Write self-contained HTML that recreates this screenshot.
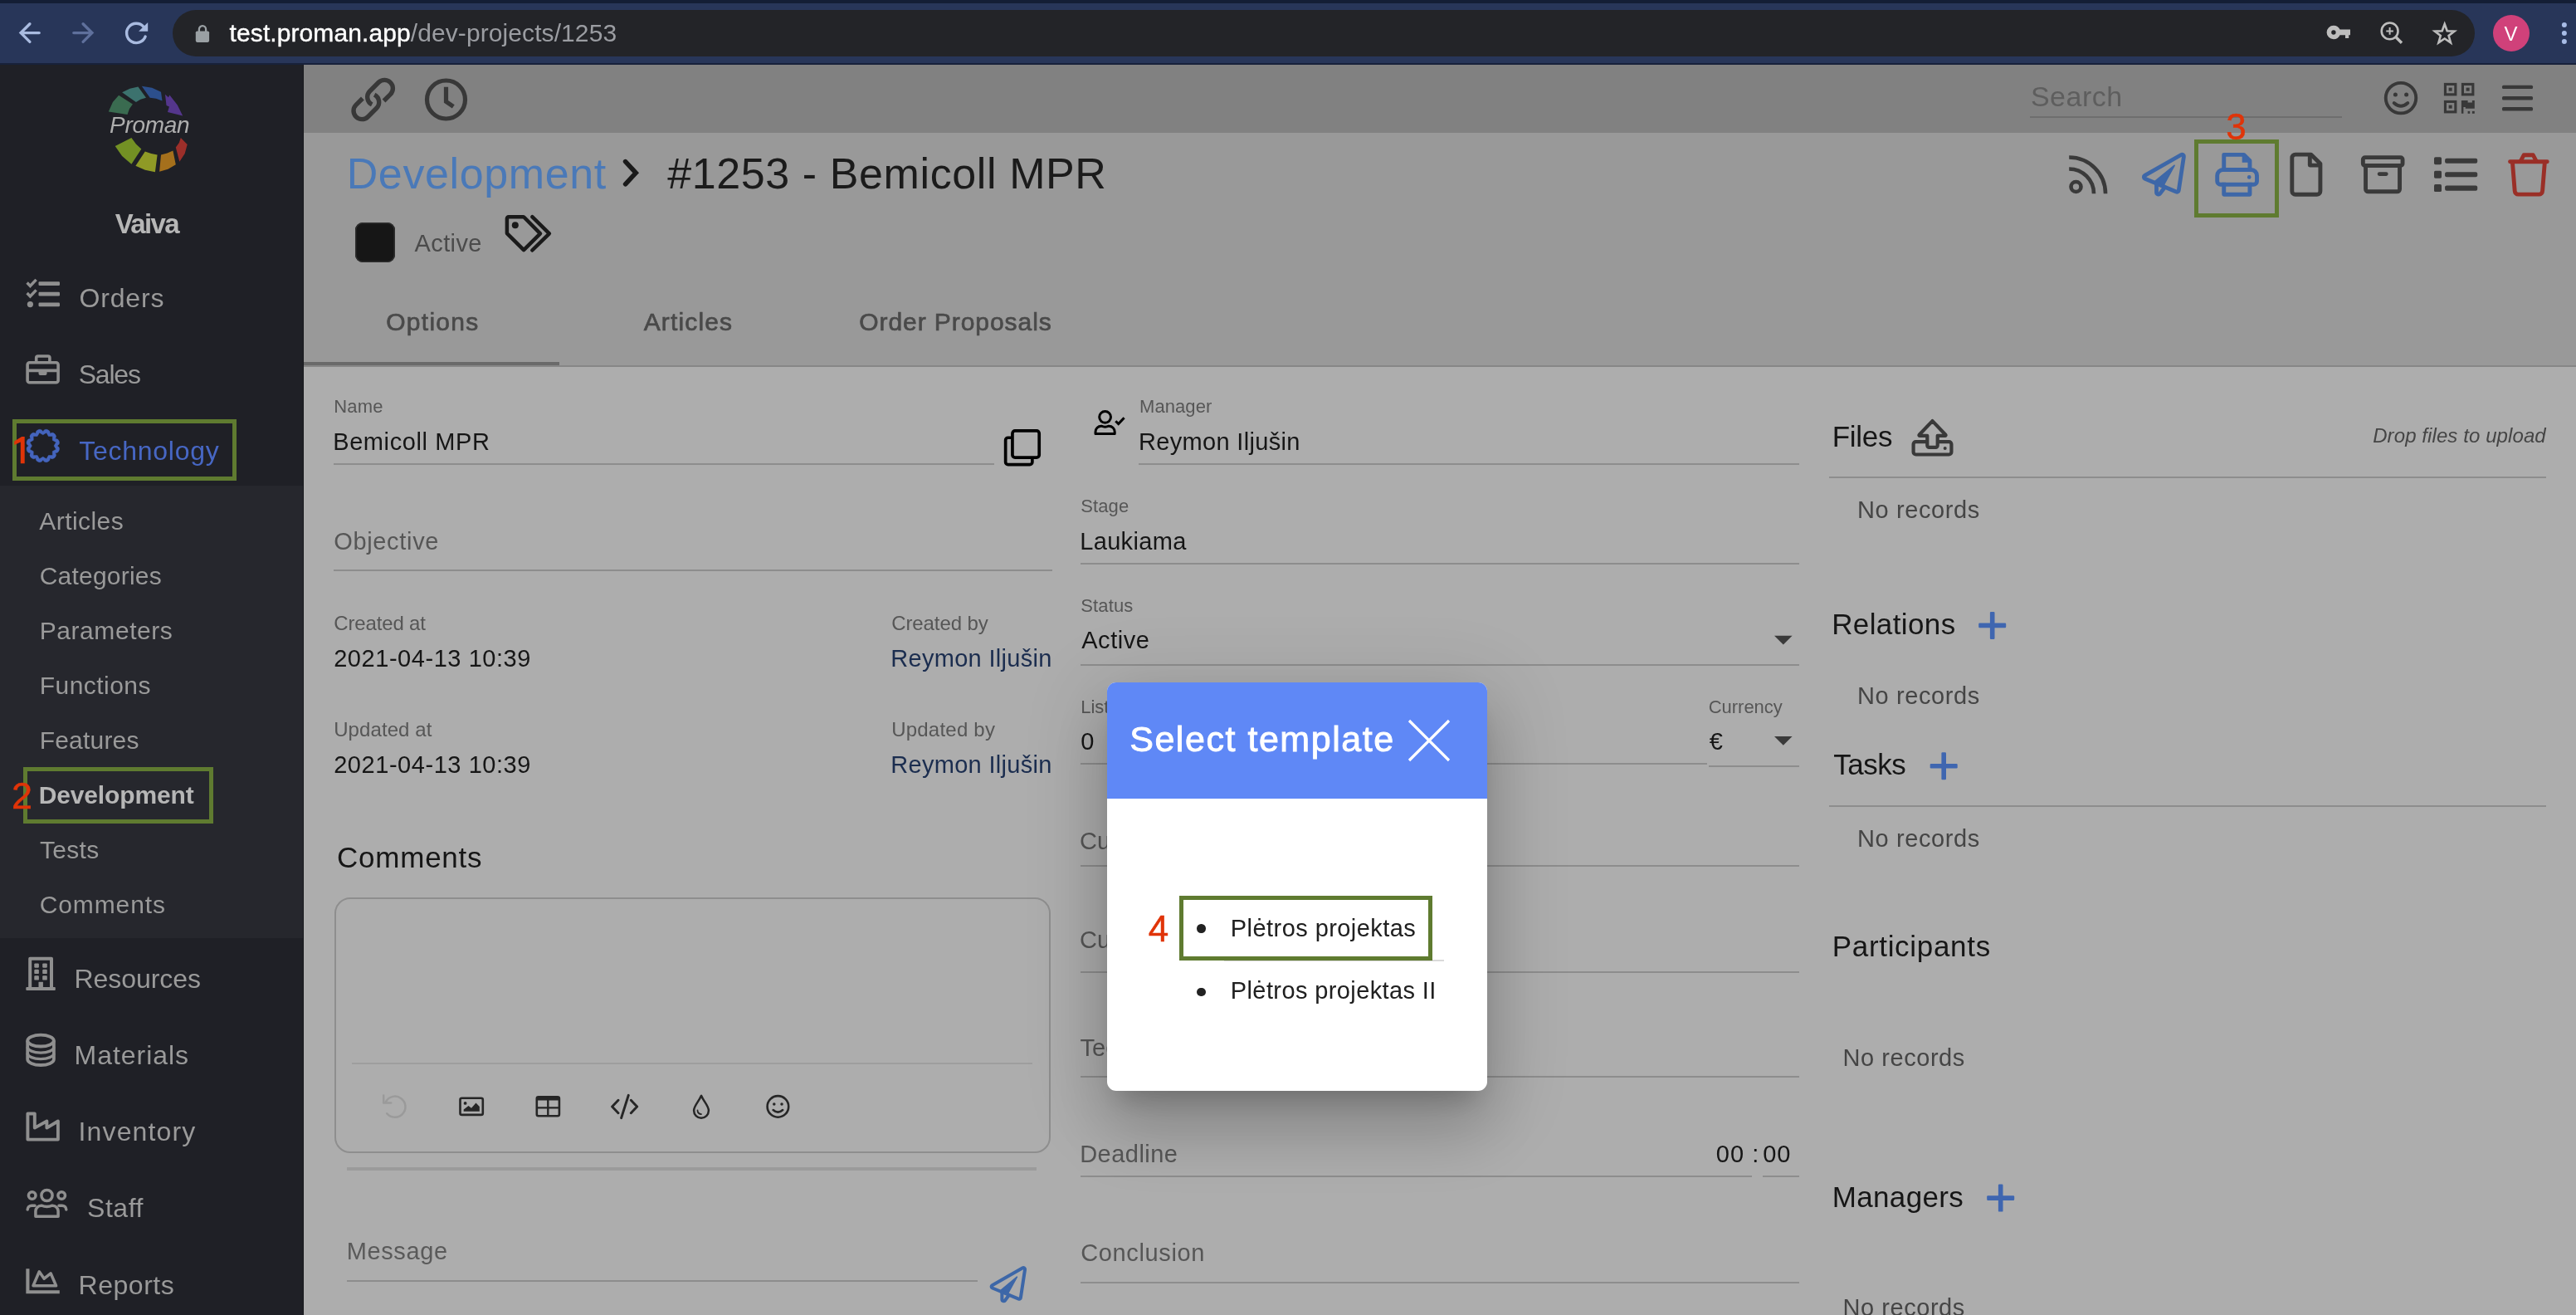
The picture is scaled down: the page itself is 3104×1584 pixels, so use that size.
<!DOCTYPE html><html><head><meta charset="utf-8"><title>Proman</title><style>
html,body{margin:0;padding:0;}
body{width:3104px;height:1584px;position:relative;overflow:hidden;background:#adadad;font-family:"Liberation Sans", sans-serif;}
#page div,#page span.t,#modal div,#modal span.t{position:absolute;}
.t{white-space:nowrap;line-height:1;}
#page,#page2{will-change:transform;}
svg.ov{position:absolute;left:0;top:0;}
#modal{position:absolute;left:1334px;top:822px;width:457.5px;height:491.5px;background:#fff;border-radius:11px;
box-shadow:0 22px 30px -14px rgba(0,0,0,.2),0 48px 76px 6px rgba(0,0,0,.14),0 18px 92px 16px rgba(0,0,0,.12);}
#mhead{left:0;top:0;width:457.5px;height:140px;background:#5f88f6;border-radius:11px 11px 0 0;}
</style></head><body>
<div id="page">
<div style="left:0px;top:0px;width:3104px;height:78px;background:#283659;"></div>
<div style="left:0px;top:0px;width:3104px;height:3.5px;background:#141e35;"></div>
<div style="left:0px;top:76.3px;width:3104px;height:1.7px;background:#18213a;"></div>
<div style="left:208px;top:12px;width:2774px;height:55.6px;background:#232428;border-radius:28px;"></div>
<div style="left:0px;top:78px;width:366px;height:1506px;background:#1f2026;"></div>
<div style="left:0px;top:585px;width:366px;height:544.5px;background:#26272d;"></div>
<div style="left:366px;top:78px;width:2738px;height:82px;background:#818181;"></div>
<div style="left:366px;top:160px;width:2738px;height:282px;background:#999999;"></div>
<div style="left:366px;top:442px;width:2738px;height:1142px;background:#adadad;"></div>
<div style="left:366px;top:440px;width:2738px;height:2.1px;background:#868686;"></div>
<div style="left:366px;top:435.6px;width:308px;height:4.6px;background:#6a6a6a;"></div>
<div style="left:364.5px;top:78px;width:1.5px;height:1506px;background:#17181c;"></div>
<div style="left:3004px;top:18px;width:44px;height:44px;background:#d0417a;border-radius:50%;"></div>
<div style="left:427.6px;top:267.6px;width:48.4px;height:48px;background:#161616;border-radius:9px;box-shadow:inset 0 0 0 1.5px #2e2e2e;"></div>
<div style="left:403px;top:1080.6px;width:862.5px;height:308.6px;border:2px solid #8e8e8e;border-radius:19px;box-sizing:border-box;"></div>
<div style="left:423.5px;top:1280.0px;width:820.2px;height:1.5px;background:#9e9e9e;"></div>
<div style="left:417.7px;top:1406.1px;width:831.7px;height:4.2px;background:#9b9b9b;"></div>
<div style="left:2446px;top:140.2px;width:376px;height:1.6px;background:#6e6e6e;"></div>
<div style="left:402px;top:558.0px;width:795.8px;height:2px;background:#8d8d8d;"></div>
<div style="left:402px;top:685.7px;width:866px;height:2px;background:#8d8d8d;"></div>
<div style="left:417.7px;top:1541.6px;width:760.3px;height:2px;background:#8d8d8d;"></div>
<div style="left:1372px;top:558.0px;width:796px;height:2px;background:#8d8d8d;"></div>
<div style="left:1302px;top:678.0px;width:866px;height:2px;background:#8d8d8d;"></div>
<div style="left:1302px;top:799.7px;width:866px;height:2px;background:#8d8d8d;"></div>
<div style="left:1302px;top:919.4px;width:755px;height:2px;background:#8d8d8d;"></div>
<div style="left:2058.5px;top:921.5px;width:109.5px;height:2px;background:#8d8d8d;"></div>
<div style="left:1302px;top:1041.8px;width:866px;height:2px;background:#8d8d8d;"></div>
<div style="left:1302px;top:1169.5px;width:866px;height:2px;background:#8d8d8d;"></div>
<div style="left:1302px;top:1295.5px;width:866px;height:2px;background:#8d8d8d;"></div>
<div style="left:1302px;top:1416.4px;width:809.4px;height:2px;background:#8d8d8d;"></div>
<div style="left:2124px;top:1416.4px;width:44px;height:2px;background:#8d8d8d;"></div>
<div style="left:1302px;top:1543.6px;width:866px;height:2px;background:#8d8d8d;"></div>
<div style="left:2204px;top:574.4px;width:864px;height:2px;background:#8d8d8d;"></div>
<div style="left:2204px;top:969.6px;width:864px;height:2px;background:#8d8d8d;"></div>
<span id="t1" class="t" style="left:276.6px;top:25.2px;font-size:30px;color:#ffffff;-webkit-text-stroke:0.4px #ffffff;letter-spacing:0.09px;">test.proman.app<span style="color:#9b9da2;-webkit-text-stroke:0">/dev-projects/1253</span></span>
<span id="t2" class="t" style="left:3017.6px;top:28.9px;font-size:24px;color:#ffffff;">V</span>
<span id="t3" class="t" style="left:132.0px;top:137.0px;font-size:28px;color:#aeaeae;font-style:italic;letter-spacing:-0.29px;">Proman</span>
<span id="t4" class="t" style="left:138.7px;top:252.5px;font-size:33px;color:#b6b6b6;font-weight:700;letter-spacing:-1.62px;">Vaiva</span>
<span id="t5" class="t" style="left:95.4px;top:343.1px;font-size:32px;color:#9a9a9a;letter-spacing:0.88px;">Orders</span>
<span id="t6" class="t" style="left:94.7px;top:434.7px;font-size:32px;color:#9a9a9a;letter-spacing:-1.21px;">Sales</span>
<span id="t7" class="t" style="left:95.3px;top:526.7px;font-size:32px;color:#4767c4;letter-spacing:0.72px;">Technology</span>
<span id="t8" class="t" style="left:47.3px;top:613.0px;font-size:30px;color:#9a9a9a;letter-spacing:0.44px;">Articles</span>
<span id="t9" class="t" style="left:47.7px;top:678.9px;font-size:30px;color:#9a9a9a;letter-spacing:0.21px;">Categories</span>
<span id="t10" class="t" style="left:47.7px;top:744.9px;font-size:30px;color:#9a9a9a;letter-spacing:0.57px;">Parameters</span>
<span id="t11" class="t" style="left:47.7px;top:810.8px;font-size:30px;color:#9a9a9a;letter-spacing:0.47px;">Functions</span>
<span id="t12" class="t" style="left:47.7px;top:876.7px;font-size:30px;color:#9a9a9a;letter-spacing:0.20px;">Features</span>
<span id="t13" class="t" style="left:46.7px;top:943.2px;font-size:30px;color:#b6b6b6;font-weight:700;letter-spacing:-0.14px;">Development</span>
<span id="t14" class="t" style="left:47.9px;top:1009.0px;font-size:30px;color:#9a9a9a;letter-spacing:0.34px;">Tests</span>
<span id="t15" class="t" style="left:47.7px;top:1075.0px;font-size:30px;color:#9a9a9a;letter-spacing:0.90px;">Comments</span>
<span id="t16" class="t" style="left:89.6px;top:1163.3px;font-size:32px;color:#9a9a9a;letter-spacing:-0.08px;">Resources</span>
<span id="t17" class="t" style="left:89.6px;top:1254.9px;font-size:32px;color:#9a9a9a;letter-spacing:0.95px;">Materials</span>
<span id="t18" class="t" style="left:94.5px;top:1347.3px;font-size:32px;color:#9a9a9a;letter-spacing:1.15px;">Inventory</span>
<span id="t19" class="t" style="left:105.1px;top:1438.6px;font-size:32px;color:#9a9a9a;letter-spacing:0.51px;">Staff</span>
<span id="t20" class="t" style="left:94.5px;top:1532.4px;font-size:32px;color:#9a9a9a;letter-spacing:0.54px;">Reports</span>
<span id="t21" class="t" style="left:2446.9px;top:98.5px;font-size:34px;color:#5e5e5e;letter-spacing:0.52px;">Search</span>
<span id="t22" class="t" style="left:417.7px;top:183.0px;font-size:52px;color:#4a79b8;letter-spacing:0.62px;">Development</span>
<span id="t23" class="t" style="left:804.2px;top:183.0px;font-size:52px;color:#1b1b1b;letter-spacing:0.60px;">#1253 - Bemicoll MPR</span>
<span id="t24" class="t" style="left:499.6px;top:279.3px;font-size:29px;color:#4b4b4b;letter-spacing:0.37px;">Active</span>
<span id="t25" class="t" style="left:465.2px;top:372.6px;font-size:30px;color:#4a4a4a;-webkit-text-stroke:0.7px #4a4a4a;letter-spacing:1.28px;">Options</span>
<span id="t26" class="t" style="left:775.7px;top:372.6px;font-size:30px;color:#4a4a4a;-webkit-text-stroke:0.7px #4a4a4a;letter-spacing:1.14px;">Articles</span>
<span id="t27" class="t" style="left:1035.2px;top:372.6px;font-size:30px;color:#4a4a4a;-webkit-text-stroke:0.7px #4a4a4a;letter-spacing:0.94px;">Order Proposals</span>
<span id="t28" class="t" style="left:402.2px;top:478.9px;font-size:22px;color:#565656;letter-spacing:0.22px;">Name</span>
<span id="t29" class="t" style="left:401.2px;top:517.5px;font-size:29px;color:#161616;letter-spacing:0.60px;">Bemicoll MPR</span>
<span id="t30" class="t" style="left:402.2px;top:637.7px;font-size:29px;color:#565656;letter-spacing:0.67px;">Objective</span>
<span id="t31" class="t" style="left:402.2px;top:739.1px;font-size:24px;color:#565656;letter-spacing:-0.14px;">Created at</span>
<span id="t32" class="t" style="left:402.2px;top:779.4px;font-size:29px;color:#161616;letter-spacing:0.55px;">2021-04-13 10:39</span>
<span id="t33" class="t" style="left:1074.2px;top:739.1px;font-size:24px;color:#565656;letter-spacing:-0.09px;">Created by</span>
<span id="t34" class="t" style="left:1073.2px;top:779.4px;font-size:29px;color:#1b2d4f;letter-spacing:0.31px;">Reymon Iljušin</span>
<span id="t35" class="t" style="left:402.2px;top:866.7px;font-size:24px;color:#565656;letter-spacing:0.09px;">Updated at</span>
<span id="t36" class="t" style="left:402.2px;top:907.4px;font-size:29px;color:#161616;letter-spacing:0.55px;">2021-04-13 10:39</span>
<span id="t37" class="t" style="left:1074.2px;top:866.7px;font-size:24px;color:#565656;letter-spacing:0.22px;">Updated by</span>
<span id="t38" class="t" style="left:1073.2px;top:907.4px;font-size:29px;color:#1b2d4f;letter-spacing:0.31px;">Reymon Iljušin</span>
<span id="t39" class="t" style="left:406.0px;top:1014.8px;font-size:35px;color:#161616;letter-spacing:0.77px;">Comments</span>
<span id="t40" class="t" style="left:417.8px;top:1492.8px;font-size:29px;color:#5a5a5a;letter-spacing:0.59px;">Message</span>
<span id="t41" class="t" style="left:1373.0px;top:478.9px;font-size:22px;color:#565656;letter-spacing:0.08px;">Manager</span>
<span id="t42" class="t" style="left:1372.0px;top:517.5px;font-size:29px;color:#161616;letter-spacing:0.33px;">Reymon Iljušin</span>
<span id="t43" class="t" style="left:1302.2px;top:598.9px;font-size:22px;color:#565656;letter-spacing:0.11px;">Stage</span>
<span id="t44" class="t" style="left:1301.2px;top:637.9px;font-size:29px;color:#161616;letter-spacing:0.35px;">Laukiama</span>
<span id="t45" class="t" style="left:1302.2px;top:719.0px;font-size:22px;color:#565656;letter-spacing:0.15px;">Status</span>
<span id="t46" class="t" style="left:1303.2px;top:757.3px;font-size:29px;color:#161616;letter-spacing:0.55px;">Active</span>
<span id="t47" class="t" style="left:1302.2px;top:840.9px;font-size:22px;color:#565656;">List price</span>
<span id="t48" class="t" style="left:1302.2px;top:878.5px;font-size:29px;color:#161616;">0</span>
<span id="t49" class="t" style="left:2058.7px;top:840.9px;font-size:22px;color:#565656;letter-spacing:-0.02px;">Currency</span>
<span id="t50" class="t" style="left:2059.7px;top:878.5px;font-size:29px;color:#161616;">€</span>
<span id="t51" class="t" style="left:1301.0px;top:999.1px;font-size:29px;color:#565656;">Customer</span>
<span id="t52" class="t" style="left:1301.0px;top:1118.3px;font-size:29px;color:#565656;">Customer manager</span>
<span id="t53" class="t" style="left:1301.5px;top:1247.5px;font-size:29px;color:#565656;">Technologist</span>
<span id="t54" class="t" style="left:1301.2px;top:1375.5px;font-size:29px;color:#565656;letter-spacing:0.47px;">Deadline</span>
<span id="t55" class="t" style="left:2067.7px;top:1375.5px;font-size:29px;color:#161616;letter-spacing:1.07px;">00</span>
<span id="t56" class="t" style="left:2111.2px;top:1375.5px;font-size:29px;color:#161616;">:</span>
<span id="t57" class="t" style="left:2124.2px;top:1375.5px;font-size:29px;color:#161616;letter-spacing:0.97px;">00</span>
<span id="t58" class="t" style="left:1302.2px;top:1495.1px;font-size:29px;color:#565656;letter-spacing:0.64px;">Conclusion</span>
<span id="t59" class="t" style="left:2207.7px;top:508.4px;font-size:35px;color:#161616;letter-spacing:-0.25px;">Files</span>
<span id="t60" class="t" style="left:2859.2px;top:513.4px;font-size:24px;color:#454545;font-style:italic;letter-spacing:0.09px;">Drop files to upload</span>
<span id="t61" class="t" style="left:2238.0px;top:599.5px;font-size:29px;color:#454545;letter-spacing:0.60px;">No records</span>
<span id="t62" class="t" style="left:2207.2px;top:734.0px;font-size:35px;color:#161616;letter-spacing:0.39px;">Relations</span>
<span id="t63" class="t" style="left:2238.0px;top:823.5px;font-size:29px;color:#454545;letter-spacing:0.60px;">No records</span>
<span id="t64" class="t" style="left:2209.2px;top:903.4px;font-size:35px;color:#161616;letter-spacing:-0.47px;">Tasks</span>
<span id="t65" class="t" style="left:2238.0px;top:995.8px;font-size:29px;color:#454545;letter-spacing:0.60px;">No records</span>
<span id="t66" class="t" style="left:2207.7px;top:1121.7px;font-size:35px;color:#161616;letter-spacing:0.69px;">Participants</span>
<span id="t67" class="t" style="left:2220.5px;top:1259.5px;font-size:29px;color:#454545;letter-spacing:0.55px;">No records</span>
<span id="t68" class="t" style="left:2207.7px;top:1424.0px;font-size:35px;color:#161616;letter-spacing:0.35px;">Managers</span>
<span id="t69" class="t" style="left:2220.5px;top:1560.5px;font-size:29px;color:#454545;letter-spacing:0.55px;">No records</span>
<svg class="ov" viewBox="0 0 3104 1584" width="3104" height="1584"><path d="M47.2,39.6 H26 M35.9,28.8 L25.1,39.6 L35.9,50.4" fill="none" stroke="#a9bbe0" stroke-width="3.4" stroke-linecap="round" stroke-linejoin="miter" /><path d="M88.8,39.6 H110 M100.1,28.8 L110.9,39.6 L100.1,50.4" fill="none" stroke="#5f709c" stroke-width="3.4" stroke-linecap="round" stroke-linejoin="miter" /><path d="M172.9,32.1 A11.65,11.65 0 1 0 175.1,44.1" fill="none" stroke="#a9bbe0" stroke-width="3.4" stroke-linecap="round" stroke-linejoin="miter" /><path d="M167.1,37.8 L178.2,27 V37.8 Z" fill="#a9bbe0"/><rect x="235.8" y="37.5" width="16.3" height="13.4" rx="1.8" fill="#9aa0a4"/><path d="M239.9,38 V35.3 A4.1,4.1 0 0 1 248.1,35.3 V38" fill="none" stroke="#9aa0a4" stroke-width="2.3" stroke-linecap="butt" stroke-linejoin="miter" /><path fill-rule="evenodd" fill="#bdbdbd" d="M2811.9,30.7 a8.3,8.3 0 1 0 0,16.6 a8.3,8.3 0 0 0 7.6,-5 H2826 V46 H2830.2 V42.3 H2832 V35.6 H2819.5 a8.3,8.3 0 0 0 -7.6,-4.9 Z M2811.9,36.3 a2.7,2.7 0 1 1 0,5.4 a2.7,2.7 0 0 1 0,-5.4 Z"/><circle cx="2879.6" cy="37.4" r="9.9" fill="none" stroke="#bdbdbd" stroke-width="2.6"/><path d="M2875.3,37.4 H2883.9 M2879.6,33.1 V41.7" fill="none" stroke="#bdbdbd" stroke-width="2" stroke-linecap="butt" stroke-linejoin="miter" /><path d="M2887,44.8 L2894,51.8" fill="none" stroke="#bdbdbd" stroke-width="3.4" stroke-linecap="butt" stroke-linejoin="miter" /><polygon points="2945.7,29.0 2948.7,37.3 2957.5,37.6 2950.6,43.0 2953.0,51.4 2945.7,46.5 2938.4,51.4 2940.8,43.0 2933.9,37.6 2942.7,37.3" fill="none" stroke="#bdbdbd" stroke-width="2.6" stroke-linejoin="miter"/><circle cx="3089.9" cy="29.9" r="3" fill="#a8bce6"/><circle cx="3089.9" cy="39.9" r="3" fill="#a8bce6"/><circle cx="3089.9" cy="50" r="3" fill="#a8bce6"/><polygon points="130.8,134.5 135.9,123.1 143.1,114.7 159.9,125.6 156.0,131.0 153.5,138.0" fill="#3a6b50"/><polygon points="147.1,111.3 156.5,106.8 166.4,104.6 176.0,117.7 169.3,119.7 163.9,123.1" fill="#3c726e"/><polygon points="170.8,103.8 183.2,105.8 194.0,110.8 195.5,121.6 188.1,118.7 180.7,117.7" fill="#2c4f8c"/><polygon points="199.0,113.7 202.9,117.2 204.4,114.5 213.8,126.6 220.2,139.4 202.0,135.0 203.9,128.6 200.5,127.1" fill="#54368c"/><polygon points="217.8,166.1 225.7,174.0 222.7,184.9 216.3,194.8 211.8,177.5 215.8,172.1" fill="#9c2f2a"/><polygon points="194.0,186.4 201.5,184.4 208.4,181.5 211.8,198.3 202.4,203.7 192.1,206.7" fill="#a5701c"/><polygon points="174.8,182.4 182.2,185.1 189.6,186.4 186.9,207.2 174.8,204.7 163.4,199.7" fill="#8f9a26"/><polygon points="158.4,166.1 163.9,173.5 170.3,179.5 158.4,197.8 147.1,187.9 138.7,176.0" fill="#739124"/><rect x="46.5" y="339.29999999999995" width="25.5" height="4.7" rx="1.2" fill="#8f8f8f"/><rect x="46.5" y="351.84999999999997" width="25.5" height="4.7" rx="1.2" fill="#8f8f8f"/><rect x="46.5" y="364.45" width="25.5" height="4.7" rx="1.2" fill="#8f8f8f"/><path d="M32.6,340.6 L36.4,344.4 L43.6,336.9" fill="none" stroke="#8f8f8f" stroke-width="3.5" stroke-linecap="butt" stroke-linejoin="miter" /><path d="M32.6,353.1 L36.4,356.9 L43.6,349.4" fill="none" stroke="#8f8f8f" stroke-width="3.5" stroke-linecap="butt" stroke-linejoin="miter" /><circle cx="36.4" cy="366.6" r="3.6" fill="#8f8f8f"/><rect x="33.1" y="436.7" width="37" height="24" rx="2.5" fill="none" stroke="#8f8f8f" stroke-width="3.6"/><path d="M43.7,435 V431 a2,2 0 0 1 2,-2 H57.9 a2,2 0 0 1 2,2 V435" fill="none" stroke="#8f8f8f" stroke-width="3.6" stroke-linecap="butt" stroke-linejoin="miter" /><path d="M33,446.4 H70" fill="none" stroke="#8f8f8f" stroke-width="3.6" stroke-linecap="butt" stroke-linejoin="miter" /><path d="M46.5,446.4 H56.5 V449.9 a2,2 0 0 1 -2,2 H48.5 a2,2 0 0 1 -2,-2 Z" fill="#8f8f8f"/><path d="M51.75,519.90 A4.5,4.5 0 0 1 60.30,522.19 A4.5,4.5 0 0 1 66.56,528.45 A4.5,4.5 0 0 1 68.85,537.00 A4.5,4.5 0 0 1 66.56,545.55 A4.5,4.5 0 0 1 60.30,551.81 A4.5,4.5 0 0 1 51.75,554.10 A4.5,4.5 0 0 1 43.20,551.81 A4.5,4.5 0 0 1 36.94,545.55 A4.5,4.5 0 0 1 34.65,537.00 A4.5,4.5 0 0 1 36.94,528.45 A4.5,4.5 0 0 1 43.20,522.19 A4.5,4.5 0 0 1 51.75,519.90 Z M51.75,523.70 L55.99,521.16 L58.40,525.48 L63.35,525.40 L63.27,530.35 L67.59,532.76 L65.05,537.00 L67.59,541.24 L63.27,543.65 L63.35,548.60 L58.40,548.52 L55.99,552.84 L51.75,550.30 L47.51,552.84 L45.10,548.52 L40.15,548.60 L40.23,543.65 L35.91,541.24 L38.45,537.00 L35.91,532.76 L40.23,530.35 L40.15,525.40 L45.10,525.48 L47.51,521.16 Z" fill="#4464bd" fill-rule="evenodd" stroke="#4464bd" stroke-width="0.5" stroke-linejoin="round"/><path d="M36.2,1191 V1154.8 H62 V1191" fill="none" stroke="#8f8f8f" stroke-width="4" stroke-linecap="butt" stroke-linejoin="round" /><rect x="31.3" y="1189" width="35.5" height="4.1" rx="1" fill="#8f8f8f"/><rect x="41.3" y="1160.4" width="5.6" height="5.3" rx="1.2" fill="#8f8f8f"/><rect x="41.3" y="1167.8" width="5.6" height="5.3" rx="1.2" fill="#8f8f8f"/><rect x="41.3" y="1175.3" width="5.6" height="5.3" rx="1.2" fill="#8f8f8f"/><rect x="51.2" y="1160.4" width="5.6" height="5.3" rx="1.2" fill="#8f8f8f"/><rect x="51.2" y="1167.8" width="5.6" height="5.3" rx="1.2" fill="#8f8f8f"/><rect x="51.2" y="1175.3" width="5.6" height="5.3" rx="1.2" fill="#8f8f8f"/><rect x="46.5" y="1182.8" width="5.4" height="7" fill="#8f8f8f"/><ellipse cx="49.05" cy="1253.6" rx="15.85" ry="6.9" fill="none" stroke="#8f8f8f" stroke-width="3.8"/><path d="M33.2,1253.6 V1276.1 A15.85,6.9 0 0 0 64.9,1276.1 V1253.6" fill="none" stroke="#8f8f8f" stroke-width="3.8" stroke-linecap="butt" stroke-linejoin="miter" /><path d="M33.2,1261.2 A15.85,6.9 0 0 0 64.9,1261.2" fill="none" stroke="#8f8f8f" stroke-width="3.4" stroke-linecap="butt" stroke-linejoin="miter" /><path d="M33.2,1268.7 A15.85,6.9 0 0 0 64.9,1268.7" fill="none" stroke="#8f8f8f" stroke-width="3.4" stroke-linecap="butt" stroke-linejoin="miter" /><path d="M33.4,1341.5 H41.8 V1358.6 L56.4,1350.5 V1358.6 L69.9,1350.5 V1372.6 H33.4 Z" fill="none" stroke="#8f8f8f" stroke-width="3.9" stroke-linecap="butt" stroke-linejoin="round" /><circle cx="56.5" cy="1440" r="6.6" fill="none" stroke="#8f8f8f" stroke-width="3.5"/><circle cx="38.7" cy="1440" r="4.3" fill="none" stroke="#8f8f8f" stroke-width="3.5"/><circle cx="74.2" cy="1440" r="4.3" fill="none" stroke="#8f8f8f" stroke-width="3.5"/><path d="M42.9,1465.2 V1459 a6.8,6.8 0 0 1 6.8,-6.8 H50 q6.5,2.6 13,0 H63.3 a6.8,6.8 0 0 1 6.8,6.8 V1465.2 Z" fill="none" stroke="#8f8f8f" stroke-width="3.5" stroke-linecap="butt" stroke-linejoin="round" /><path d="M33.2,1457 a5,5 0 0 1 5,-4.8 H42" fill="none" stroke="#8f8f8f" stroke-width="3.5" stroke-linecap="round" stroke-linejoin="miter" /><path d="M79.8,1457 a5,5 0 0 0 -5,-4.8 H71" fill="none" stroke="#8f8f8f" stroke-width="3.5" stroke-linecap="round" stroke-linejoin="miter" /><path d="M33.4,1528.2 V1556.3 H71.8" fill="none" stroke="#8f8f8f" stroke-width="4.1" stroke-linecap="butt" stroke-linejoin="miter" /><path d="M40,1548.8 L47.3,1531.8 L53.2,1540.2 L61.1,1533.8 L67.6,1548.8 Z" fill="none" stroke="#8f8f8f" stroke-width="3.5" stroke-linecap="butt" stroke-linejoin="round" /><g transform="translate(449.7,120) rotate(-45)"><path d="M8,10.1 H19.2 A10.1,10.1 0 0 0 19.2,-10.1 H4.4 A10.1,10.1 0 0 0 -5.21,3.12" fill="none" stroke="#383838" stroke-width="5.4" stroke-linecap="butt" stroke-linejoin="miter" /></g><g transform="translate(449.7,120) rotate(135)"><path d="M8,10.1 H19.2 A10.1,10.1 0 0 0 19.2,-10.1 H4.4 A10.1,10.1 0 0 0 -5.21,3.12" fill="none" stroke="#383838" stroke-width="5.4" stroke-linecap="butt" stroke-linejoin="miter" /></g><circle cx="537.5" cy="120" r="23" fill="none" stroke="#383838" stroke-width="5.2"/><path d="M537.5,104.8 V122.3 L546.3,128.3" fill="none" stroke="#383838" stroke-width="5.2" stroke-linecap="butt" stroke-linejoin="miter" /><circle cx="2893" cy="118.1" r="18.25" fill="none" stroke="#383838" stroke-width="3.9"/><circle cx="2886.40" cy="114.10" r="2.50" fill="#383838"/><circle cx="2899.60" cy="114.10" r="2.50" fill="#383838"/><path d="M2884.70,124.00 Q2893,131.50 2901.30,124.00" fill="none" stroke="#383838" stroke-width="3.9" stroke-linecap="round" stroke-linejoin="miter" /><rect x="2946.4500000000003" y="101.45" width="12.4" height="12.4" fill="none" stroke="#383838" stroke-width="3.1"/><rect x="2950.65" y="105.65" width="4" height="4" fill="#383838"/><rect x="2967.4500000000003" y="101.45" width="12.4" height="12.4" fill="none" stroke="#383838" stroke-width="3.1"/><rect x="2971.65" y="105.65" width="4" height="4" fill="#383838"/><rect x="2946.4500000000003" y="122.45" width="12.4" height="12.4" fill="none" stroke="#383838" stroke-width="3.1"/><rect x="2950.65" y="126.65" width="4" height="4" fill="#383838"/><path fill="#383838" d="M2965.9,120.9 H2973.6 V123.4 H2978.9 V120.9 H2981.8 V130.70000000000002 H2970.8 V129.0 H2968.4 V136.8 H2965.9 Z"/><rect x="2973.6" y="133.9" width="2.6" height="2.9" fill="#383838"/><rect x="2978.9" y="133.9" width="2.9" height="2.9" fill="#383838"/><rect x="3015" y="102.7" width="37" height="4.4" rx="1.5" fill="#383838"/><rect x="3015" y="116" width="37" height="4.4" rx="1.5" fill="#383838"/><rect x="3015" y="129.1" width="37" height="4.4" rx="1.5" fill="#383838"/><circle cx="2501.5" cy="225" r="6" fill="none" stroke="#3a3a3a" stroke-width="4.6"/><path d="M2493.2,189.45000000000002 A43.85,43.85 0 0 1 2537.0499999999997,233.3" fill="none" stroke="#3a3a3a" stroke-width="4.6" stroke-linecap="butt" stroke-linejoin="miter" /><path d="M2493.2,203.5 A29.8,29.8 0 0 1 2523.0,233.3" fill="none" stroke="#3a3a3a" stroke-width="4.6" stroke-linecap="butt" stroke-linejoin="miter" /><g transform="translate(2580.9,183.8) scale(1.0)"><path d="M50.53,4.93 A2.2,2.2 0 0 0 47.26,2.69 L3.51,27.59 A2.2,2.2 0 0 0 3.75,31.53 L41.35,47.23 A2.2,2.2 0 0 0 44.38,45.53 Z" fill="none" stroke="#3d67a8" stroke-width="4.8" stroke-linecap="butt" stroke-linejoin="round" /><path d="M39.1,15.6 L16.2,34.5 L26.5,38.6 Z" fill="#3d67a8" stroke="#3d67a8" stroke-width="1.8" stroke-linecap="butt" stroke-linejoin="round" /><path d="M17.6,36 V47.9 A2.4,2.4 0 0 0 21.92,49.34 L29,39.9" fill="none" stroke="#3d67a8" stroke-width="4.8" stroke-linecap="butt" stroke-linejoin="round" /></g><g transform="translate(2669.2,183.7) "><path d="M10.55,20 V2.65 H34.5 L41.75,9.9 V20" fill="none" stroke="#3d67a8" stroke-width="4.9" stroke-linecap="butt" stroke-linejoin="round" /><path d="M32.5,2.6 V12 H41.8 V9.9 L34.5,2.6 Z" fill="#3d67a8"/><path d="M10.55,38.55 H6.5 a4,4 0 0 1 -4,-4 V27.8 a7,7 0 0 1 7,-7 H43.3 a7,7 0 0 1 7,7 V34.55 a4,4 0 0 1 -4,4 H41.75" fill="none" stroke="#3d67a8" stroke-width="4.9" stroke-linecap="butt" stroke-linejoin="miter" /><path d="M10.55,36.1 V50.5 H41.75 V36.1" fill="none" stroke="#3d67a8" stroke-width="4.9" stroke-linecap="butt" stroke-linejoin="round" /><path d="M10.55,38.55 H41.75" fill="none" stroke="#3d67a8" stroke-width="4.9" stroke-linecap="butt" stroke-linejoin="miter" /><circle cx="41" cy="29.7" r="2.3" fill="#3d67a8"/></g><g transform="translate(2759.3,183.7) "><path d="M6.5,2.45 H25.5 L36.6,13.5 V46.5 a4,4 0 0 1 -4,4 H6.5 a4,4 0 0 1 -4,-4 V6.45 a4,4 0 0 1 4,-4 Z" fill="none" stroke="#3a3a3a" stroke-width="4.9" stroke-linecap="butt" stroke-linejoin="round" /><path d="M24,2.45 V15.4 H36.6" fill="none" stroke="#3a3a3a" stroke-width="4.9" stroke-linecap="butt" stroke-linejoin="round" /></g><g transform="translate(2844.9,187.2) "><rect x="2.45" y="2.45" width="47.7" height="9.8" rx="2.5" fill="none" stroke="#3a3a3a" stroke-width="4.9"/><path d="M5.65,12.25 V40.6 a3,3 0 0 0 3,3 H43.65 a3,3 0 0 0 3,-3 V12.25" fill="none" stroke="#3a3a3a" stroke-width="4.9" stroke-linecap="butt" stroke-linejoin="miter" /><rect x="19.9" y="20" width="12.8" height="4.7" rx="2.3" fill="#3a3a3a"/></g><g transform="translate(2933,189.2) "><rect x="0" y="0" width="9" height="9" rx="1.6" fill="#3a3a3a"/><rect x="13.1" y="1.5" width="39.1" height="6.1" rx="2" fill="#3a3a3a"/><rect x="0" y="16.5" width="9" height="9" rx="1.6" fill="#3a3a3a"/><rect x="13.1" y="18.0" width="39.1" height="6.1" rx="2" fill="#3a3a3a"/><rect x="0" y="32.9" width="9" height="9" rx="1.6" fill="#3a3a3a"/><rect x="13.1" y="34.4" width="39.1" height="6.1" rx="2" fill="#3a3a3a"/></g><g transform="translate(3022.1,183.7) "><path d="M2.45,11 H47.15" fill="none" stroke="#9a2f27" stroke-width="4.9" stroke-linecap="round" stroke-linejoin="miter" /><path d="M14.9,11 L19,3.05 H30.2 L34.3,11" fill="none" stroke="#9a2f27" stroke-width="4.9" stroke-linecap="butt" stroke-linejoin="round" /><path d="M5.3,11 L8.1,46.3 a4.2,4.2 0 0 0 4.2,4.1 H37.3 a4.2,4.2 0 0 0 4.2,-4.1 L44.3,11" fill="none" stroke="#9a2f27" stroke-width="4.9" stroke-linecap="butt" stroke-linejoin="miter" /></g><path d="M753.6,194.6 L766.2,208.2 L753.6,221.8" fill="none" stroke="#1a1a1a" stroke-width="5.6" stroke-linecap="round" stroke-linejoin="miter" /><g transform="translate(608.6,258.7) "><path d="M4.3,2.5 H21.6 a2,2 0 0 1 1.4,0.6 L42.4,22.6 L22.5,42.5 L2.3,22.4 V4.5 a2,2 0 0 1 2,-2 Z" fill="none" stroke="#1a1a1a" stroke-width="4.5" stroke-linecap="butt" stroke-linejoin="round" /><circle cx="12.2" cy="12.5" r="4" fill="#1a1a1a"/><path d="M32.7,2.5 L53.3,22.6 L32.7,42.8" fill="none" stroke="#1a1a1a" stroke-width="4.5" stroke-linecap="round" stroke-linejoin="round" /></g><rect x="1219.95" y="518.95" width="32.25" height="32.2" rx="3.2" fill="none" stroke="#000" stroke-width="3.7"/><path d="M1220,527.25 H1214.65 a3,3 0 0 0 -3,3 V556.65 a3,3 0 0 0 3,3 H1240.85 a3,3 0 0 0 3,-3 V551.2" fill="none" stroke="#000" stroke-width="3.7" stroke-linecap="butt" stroke-linejoin="miter" /><circle cx="1331.6" cy="502.35" r="6.9" fill="none" stroke="#000" stroke-width="3"/><path d="M1320,522.4 H1343.2 V520.2 a7,7 0 0 0 -7,-7 H1336 q-4.4,2 -8.8,0 H1327 a7,7 0 0 0 -7,7 Z" fill="none" stroke="#000" stroke-width="3" stroke-linecap="butt" stroke-linejoin="round" /><path d="M1344.3,507.2 L1347.7,510.6 L1354.6,503.3" fill="none" stroke="#000" stroke-width="3" stroke-linecap="butt" stroke-linejoin="miter" /><path d="M2138,765.8 H2159.6 L2148.8,776.6 Z" fill="#3a3a3a"/><path d="M2138,887 H2159.6 L2148.8,897.8 Z" fill="#3a3a3a"/><rect x="2305.6" y="532.1" width="45.8" height="15.4" rx="3" fill="none" stroke="#393939" stroke-width="4.2"/><path d="M2328.5,507.1 L2312.6,523.8 a0.6,0.6 0 0 0 0.4,1 H2322.3 V536.6 a2.3,2.3 0 0 0 2.3,2.3 H2332.4 a2.3,2.3 0 0 0 2.3,-2.3 V524.8 H2344 a0.6,0.6 0 0 0 0.4,-1 Z" fill="#adadad" stroke="#393939" stroke-width="4.2" stroke-linecap="butt" stroke-linejoin="round" /><circle cx="2343.7" cy="540" r="2" fill="#393939"/><rect x="2384.2" y="750.6" width="33" height="5.6" rx="1.2" fill="#3f66b0"/><rect x="2397.8999999999996" y="736.9" width="5.6" height="33" rx="1.2" fill="#3f66b0"/><rect x="2325.7" y="919.9000000000001" width="33" height="5.6" rx="1.2" fill="#3f66b0"/><rect x="2339.3999999999996" y="906.2" width="5.6" height="33" rx="1.2" fill="#3f66b0"/><rect x="2394.2" y="1440.3" width="33" height="5.6" rx="1.2" fill="#3f66b0"/><rect x="2407.8999999999996" y="1426.6" width="5.6" height="33" rx="1.2" fill="#3f66b0"/><path d="M465.0,1326.9 A12.6,12.6 0 1 1 466.2,1341.3" fill="none" stroke="#9a9a9a" stroke-width="2.5" stroke-linecap="round" stroke-linejoin="miter" /><path d="M462.2,1319.5 V1328.5 H471.2" fill="none" stroke="#9a9a9a" stroke-width="2.5" stroke-linecap="round" stroke-linejoin="round" /><rect x="554.5" y="1322.7" width="27.3" height="20.2" rx="2" fill="none" stroke="#262626" stroke-width="2.6"/><circle cx="560.6" cy="1328.9" r="1.9" fill="#262626"/><path d="M558.7,1338.8 V1336.6 L564.5,1332 L568,1334.8 L573.5,1328.6 L577.8,1333 V1338.8 Z" fill="#262626"/><rect x="646.8" y="1321.3" width="27.1" height="23" rx="2" fill="none" stroke="#262626" stroke-width="2.6"/><rect x="646.8" y="1321.3" width="27.1" height="4.2" fill="#262626"/><path d="M660.3,1322 V1344 M647,1334.4 H674" fill="none" stroke="#262626" stroke-width="2.4" stroke-linecap="butt" stroke-linejoin="miter" /><path d="M745,1325.3 L737.6,1333 L745,1340.7 M760.3,1325.3 L767.7,1333 L760.3,1340.7 M757.3,1319.3 L748.6,1346.7" fill="none" stroke="#262626" stroke-width="2.9" stroke-linecap="round" stroke-linejoin="round" /><path d="M845,1319.8 C 842,1327 836.1,1332 836.1,1337.8 a8.9,8.9 0 0 0 17.8,0 C 853.9,1332 848,1327 845,1319.8 Z" fill="none" stroke="#262626" stroke-width="2.5" stroke-linecap="butt" stroke-linejoin="round" /><path d="M840.5,1337.5 a4.5,4.5 0 0 0 4.5,4.6" fill="none" stroke="#262626" stroke-width="1.8" stroke-linecap="round" stroke-linejoin="miter" /><circle cx="937.4" cy="1332.9" r="12.80" fill="none" stroke="#262626" stroke-width="2.6"/><circle cx="932.79" cy="1330.11" r="1.75" fill="#262626"/><circle cx="942.01" cy="1330.11" r="1.75" fill="#262626"/><path d="M931.61,1337.02 Q937.4,1342.25 943.19,1337.02" fill="none" stroke="#262626" stroke-width="2.6" stroke-linecap="round" stroke-linejoin="miter" /><g transform="translate(1192.6,1525) scale(0.84)"><path d="M50.53,4.93 A2.2,2.2 0 0 0 47.26,2.69 L3.51,27.59 A2.2,2.2 0 0 0 3.75,31.53 L41.35,47.23 A2.2,2.2 0 0 0 44.38,45.53 Z" fill="none" stroke="#3d67a8" stroke-width="4.8" stroke-linecap="butt" stroke-linejoin="round" /><path d="M39.1,15.6 L16.2,34.5 L26.5,38.6 Z" fill="#3d67a8" stroke="#3d67a8" stroke-width="1.8" stroke-linecap="butt" stroke-linejoin="round" /><path d="M17.6,36 V47.9 A2.4,2.4 0 0 0 21.92,49.34 L29,39.9" fill="none" stroke="#3d67a8" stroke-width="4.8" stroke-linecap="butt" stroke-linejoin="round" /></g></svg>
<div style="left:14.9px;top:504.9px;width:270.1px;height:74.10000000000002px;border:5px solid #5f7b30;box-sizing:border-box;"></div>
<div style="left:27.9px;top:924.1px;width:229.1px;height:68.39999999999998px;border:5px solid #5f7b30;box-sizing:border-box;"></div>
<div style="left:2644.2px;top:168px;width:101.60000000000036px;height:93.80000000000001px;border:5px solid #5f7b30;box-sizing:border-box;"></div>
<span id="t70" class="t" style="left:13.9px;top:935.7px;font-size:45px;color:#e03408;-webkit-text-stroke:0.5px #e03408;">2</span>
<span id="t71" class="t" style="left:2682.3px;top:130.8px;font-size:44px;color:#e03408;-webkit-text-stroke:0.5px #e03408;">3</span>
<svg class="ov" viewBox="0 0 3104 1584" width="3104" height="1584"><path d="M29.7,525.9 V558.2 H24.8 V532.6 L17.2,536 V531.4 L26.2,525.9 Z" fill="#e03408"/></svg>
</div>
<div id="modal"><div id="mhead"></div></div>
<div id="page2" style="position:absolute;left:0;top:0;">
<div style="position:absolute;left:1474.6px;top:1156px;width:265.4px;height:2px;background:#d9d9d9;"></div>
<div style="position:absolute;left:1442px;top:1113.4px;width:10.5px;height:10.5px;border-radius:50%;background:#222;"></div>
<div style="position:absolute;left:1442px;top:1189.6px;width:10.5px;height:10.5px;border-radius:50%;background:#222;"></div>
<div style="position:absolute;left:1421px;top:1079px;width:305px;height:77.5px;border:5px solid #5f7b30;box-sizing:border-box;"></div>
<span id="t72" class="t"  style="position:absolute;left:1361.2px;top:869.4px;font-size:43px;color:#ffffff;-webkit-text-stroke:0.9px #ffffff;letter-spacing:1.54px;">Select template</span>
<span id="t73" class="t"  style="position:absolute;left:1482.8px;top:1103.5px;font-size:29px;color:#202020;letter-spacing:0.44px;">Plėtros projektas</span>
<span id="t74" class="t"  style="position:absolute;left:1482.8px;top:1178.8px;font-size:29px;color:#202020;letter-spacing:0.39px;">Plėtros projektas II</span>
<span id="t75" class="t"  style="position:absolute;left:1383.7px;top:1096.8px;font-size:44px;color:#e03408;-webkit-text-stroke:0.5px #e03408;">4</span>
<svg class="ov" viewBox="0 0 3104 1584" width="3104" height="1584"><path d="M1698,868 L1746,916 M1746,868 L1698,916" fill="none" stroke="#fff" stroke-width="3.2" stroke-linecap="butt" stroke-linejoin="miter" /></svg>
</div>
</body></html>
